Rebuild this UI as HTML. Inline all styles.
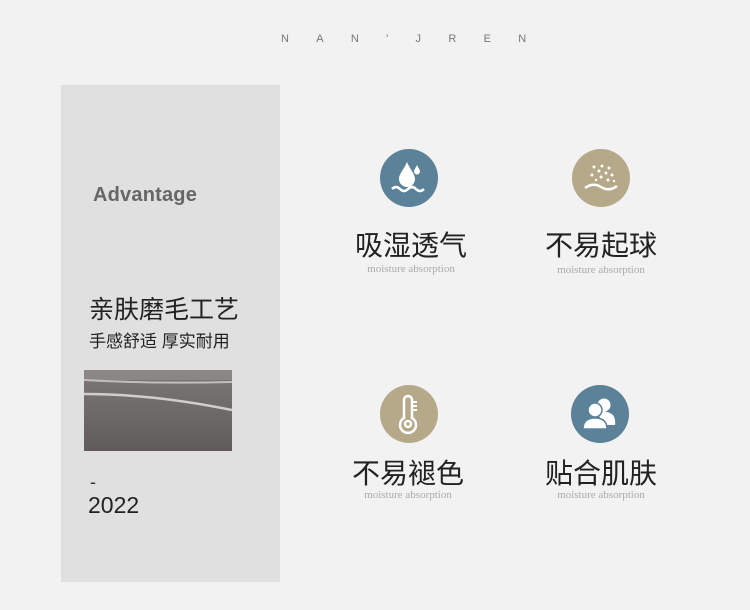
<!DOCTYPE html>
<html><head><meta charset="utf-8"><style>
*{margin:0;padding:0;box-sizing:border-box}
body{width:750px;height:610px;background:#f2f2f2;position:relative;overflow:hidden;font-family:"Liberation Sans","Noto Sans CJK SC",sans-serif}
.abs{position:absolute}
.top{left:281px;top:33px;font-size:11px;letter-spacing:27.3px;color:#777;white-space:nowrap}
.panel{left:61px;top:85px;width:219px;height:497px;background:#e0e0e0}
.cn{font-size:28px;color:#222;white-space:nowrap;text-align:center;line-height:1}
.en{font-family:"Liberation Serif",serif;font-size:11px;color:#aaa;text-align:center;white-space:nowrap}
.circ{width:58px;height:58px;border-radius:50%}
</style></head><body>
<div class="abs top">NAN'JREN</div>
<div class="abs panel"></div>
<div class="abs" style="left:93px;top:184px;font-size:20px;font-weight:bold;color:#666;letter-spacing:0.2px">Advantage</div>
<div class="abs" style="left:89px;top:290px;font-size:25px;color:#222;white-space:nowrap">亲肤磨毛工艺</div>
<div class="abs" style="left:89px;top:327px;font-size:17px;color:#222;white-space:nowrap">手感舒适 厚实耐用</div>
<svg class="abs" style="left:84px;top:370px" width="148" height="81" viewBox="0 0 148 81">
<defs><linearGradient id="g" x1="0" y1="0" x2="0" y2="1"><stop offset="0" stop-color="#7b7877"/><stop offset="1" stop-color="#5f5c5b"/></linearGradient></defs>
<rect width="148" height="81" fill="url(#g)"/>
<rect x="0" y="0" width="148" height="10" fill="#8a8786"/>
<path d="M0 10 Q70 14 148 12" stroke="#c2bfbd" stroke-width="2" fill="none"/>
<path d="M0 24 Q70 24 148 40" stroke="#d0cdcb" stroke-width="2.5" fill="none"/>
</svg>
<div class="abs" style="left:90px;top:472px;font-size:18px;color:#333">-</div>
<div class="abs" style="left:88px;top:492px;font-size:23px;color:#222">2022</div>

<div class="abs circ" style="left:380px;top:149px;background:#5b8298"></div>
<svg class="abs" style="left:380px;top:149px" width="58" height="58" viewBox="0 0 58 58" fill="#fff">
<path d="M27 13 C23 22 19 25 19 30 a8 8 0 0 0 16 0 C35 25 31 22 27 13Z"/>
<path d="M37 16 C35 20 34 21 34 22.5 a3 3 0 0 0 6 0 C40 21 39 20 37 16Z"/>
<path d="M12 40 q4 -4 8 0 t8 0 t8 0 t8 0" stroke="#fff" stroke-width="2.5" fill="none"/>
</svg>
<div class="abs cn" style="left:330px;top:232px;width:162px">吸湿透气</div>
<div class="abs en" style="left:330px;top:263px;width:162px">moisture absorption</div>

<div class="abs circ" style="left:572px;top:149px;background:#b5a98a"></div>
<svg class="abs" style="left:572px;top:149px" width="58" height="58" viewBox="0 0 58 58" fill="#fff">
<circle cx="22" cy="18" r="1.5"/><circle cx="30" cy="17" r="1.5"/><circle cx="37" cy="19" r="1.5"/><circle cx="27" cy="22" r="1.5"/><circle cx="34" cy="24" r="1.5"/><circle cx="20" cy="26" r="1.5"/><circle cx="40" cy="26" r="1.5"/><circle cx="29" cy="28" r="1.5"/><circle cx="24" cy="31" r="1.2"/><circle cx="36" cy="31" r="1.5"/><circle cx="42" cy="32" r="1.2"/>
<path d="M13 39 q8 -6 16 -1 t16 -1" stroke="#fff" stroke-width="2.5" fill="none"/>
</svg>
<div class="abs cn" style="left:520px;top:232px;width:162px">不易起球</div>
<div class="abs en" style="left:520px;top:264px;width:162px">moisture absorption</div>

<div class="abs circ" style="left:380px;top:385px;background:#b5a98a"></div>
<svg class="abs" style="left:380px;top:385px" width="58" height="58" viewBox="0 0 58 58" fill="none" stroke="#fff" stroke-width="2.5">
<path d="M24 33 V15 a4 4 0 0 1 8 0 V33 a8 8 0 1 1 -8 0Z"/>
<circle cx="28" cy="39" r="3"/>
<path d="M33 17 h4 M33 21 h4 M33 25 h4" stroke-width="2"/>
</svg>
<div class="abs cn" style="left:327px;top:460px;width:162px">不易褪色</div>
<div class="abs en" style="left:327px;top:489px;width:162px">moisture absorption</div>

<div class="abs circ" style="left:571px;top:385px;background:#5b8298"></div>
<svg class="abs" style="left:571px;top:385px" width="58" height="58" viewBox="0 0 58 58" fill="#fff">
<circle cx="33" cy="20" r="6.5"/>
<path d="M26 28 Q34 24 42 30 Q45 35 44 40 H34Z"/>
<circle cx="24" cy="25" r="7" stroke="#5b8298" stroke-width="1.5"/>
<path d="M12 44 Q12 33 24 33 Q36 33 36 44Z" stroke="#5b8298" stroke-width="1.5"/>
</svg>
<div class="abs cn" style="left:520px;top:460px;width:162px">贴合肌肤</div>
<div class="abs en" style="left:520px;top:489px;width:162px">moisture absorption</div>
</body></html>
